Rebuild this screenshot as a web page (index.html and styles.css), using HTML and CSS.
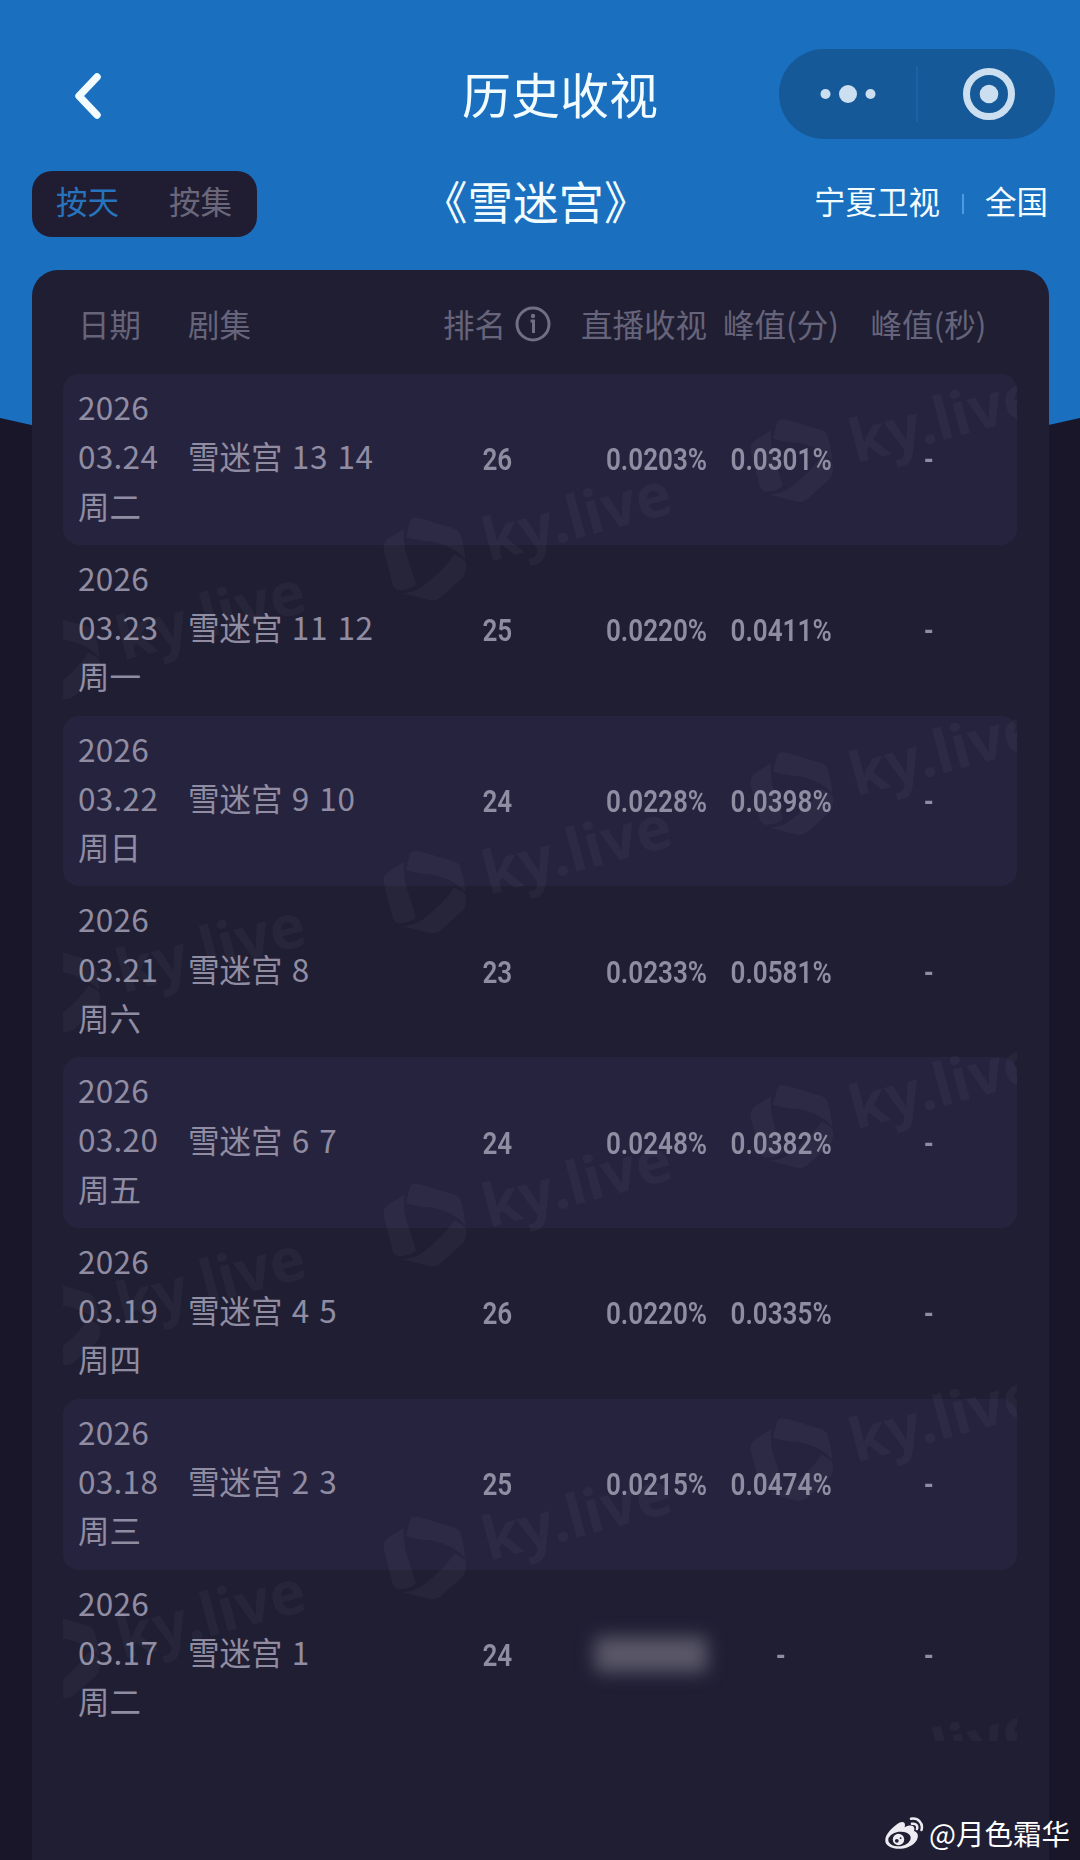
FILE: index.html
```html
<!DOCTYPE html>
<html lang="zh-CN">
<head>
  <meta charset="UTF-8">
  <title>历史收视</title>
  <link rel="stylesheet" href="styles.css">
</head>
<body>

  <header class="navbar">
    <svg class="back" viewBox="0 0 26 46">
      <path d="M22 4 L4 23 L22 42"/>
    </svg>
    <h1>历史收视</h1>
    <div class="capsule">
      <svg class="dots" viewBox="0 0 56 20">
        <circle cx="5.5" cy="10" r="5"/>
        <circle cx="28" cy="10" r="9"/>
        <circle cx="50.5" cy="10" r="5"/>
      </svg>
      <span class="line"></span>
      <svg class="target" viewBox="0 0 52 52">
        <circle class="ring" cx="26" cy="26" r="22.5"/>
        <circle cx="26" cy="26" r="9.3"/>
      </svg>
    </div>
  </header>

  <div class="filters">
    <div class="tabs">
      <span class="active">按天</span>
      <span>按集</span>
    </div>
    <h2>《雪迷宫》</h2>
    <div class="channel">
      <span>宁夏卫视</span>
      <i></i>
      <span>全国</span>
    </div>
  </div>

  <main class="card">
    <div class="row head">
      <span>日期</span>
      <span>剧集</span>
      <span class="rank">排名
        <svg class="info" viewBox="0 0 36 36">
          <circle cx="18" cy="18" r="16"/>
          <circle class="dot" cx="18" cy="10" r="2.2"/>
          <path d="M15.5 15 H18.5 V27"/>
        </svg>
      </span>
      <span class="rate">直播收视</span>
      <span class="peak">峰值(分)</span>
      <span class="peak">峰值(秒)</span>
    </div>

    <div class="list" id="list">
      <svg class="watermark" viewBox="0 0 954 1367">
        <defs>
          <g id="mark">
            <g transform="scale(.3333) translate(-195 -240)">
              <path d="M165 115 Q153 115 149 128 L138 173 Q180 184 215 186 Q285 200 316 240 Q312 195 301 163 Q295 150 275 145 L185 118 Z"/>
              <path d="M132 148 L88 175 Q66 190 72 215 L98 315 Q104 332 118 332 Q150 332 168 315 L135 210 Q130 180 132 148 Z"/>
              <path d="M283 224 Q255 270 183 325 Q160 340 128 341 L205 361 Q225 367 240 355 L308 294 Q320 280 318 250 Q310 235 283 224 Z"/>
            </g>
            <text transform="rotate(-15)" x="61" y="19" textLength="193">ky.live</text>
          </g>
          <g id="marks">
            <use href="#mark" x="-4" y="284"/>
            <use href="#mark" x="362" y="185.5"/>
            <use href="#mark" x="729" y="87"/>
          </g>
        </defs>
        <use href="#marks"/>
        <use href="#marks" y="333"/>
        <use href="#marks" y="666"/>
        <use href="#marks" y="999"/>
        <use href="#marks" y="1332"/>
      </svg>
    </div>
  </main>

  <div class="author">
    <svg viewBox="0 0 40 33">
      <path d="M11 8 C15 4.500 20 3.500 20 8 L19.600 10.300 C25 7 31 8.500 29 14 C34 15.500 34 21 30 25.500 C23 33.500 6 34 1 26.500 C-2 20 5 12.500 11 8 Z"/>
      <ellipse class="hole" cx="14.500" cy="22" rx="11.300" ry="7.200" transform="rotate(-8 14.500 22)"/>
      <circle cx="13.500" cy="22.500" r="5.700"/>
      <circle class="hole" cx="11.800" cy="23.800" r="1.900"/>
      <circle class="hole" cx="15.600" cy="21.200" r=".9"/>
      <path class="wave" d="M26 1.800 C33 .5 38.500 6 36.500 13 M27 6.800 C31 6 33 8.500 32 12"/>
    </svg>
    <span>@月色霜华</span>
  </div>

  <script>
    const rows = [
      ['03.24', '周二', '13 14', 26, '0.0203%', '0.0301%'],
      ['03.23', '周一', '11 12', 25, '0.0220%', '0.0411%'],
      ['03.22', '周日', '9 10', 24, '0.0228%', '0.0398%'],
      ['03.21', '周六', '8', 23, '0.0233%', '0.0581%'],
      ['03.20', '周五', '6 7', 24, '0.0248%', '0.0382%'],
      ['03.19', '周四', '4 5', 26, '0.0220%', '0.0335%'],
      ['03.18', '周三', '2 3', 25, '0.0215%', '0.0474%'],
      ['03.17', '周二', '1', 24, '', '-']
    ];

    const list = document.getElementById('list');

    rows.forEach(function (r) {
      // no value means the rating is hidden behind a blurred block
      const rate = r[4] ? '<b>' + r[4] + '</b>' : '<em class="masked"></em>';

      const row = document.createElement('div');
      row.className = 'row';
      row.innerHTML =
        '<span class="date"><span>2026<br>' + r[0] + '</span><br>' + r[1] + '</span>' +
        '<span class="episode">雪迷宫<span> ' + r[2] + '</span></span>' +
        '<span class="rank"><b>' + r[3] + '</b></span>' +
        '<span class="rate">' + rate + '</span>' +
        '<span class="peak"><b>' + r[5] + '</b></span>' +
        '<span class="peak"><b>-</b></span>';
      list.appendChild(row);
    });
  </script>

</body>
</html>
```
FILE: styles.css
```css
* {
  box-sizing: border-box;
}
body {
  margin: 0;
  height: 1860px;
  overflow: hidden;
  position: relative;
  display: flex;
  flex-direction: column;
  font-family: "Noto Sans CJK SC", sans-serif;
  font-size: 31.5px;
  color: #908da3;
  background-color: #191629;
}
/* blue backdrop, pointed at the bottom */
body::before {
  content: "";
  position: absolute;
  z-index: -1;
  top: 0;
  left: 0;
  width: 100%;
  height: 538px;
  background-color: #1a6fbf;
  clip-path: polygon(0 0, 100% 0, 100% 418px, 50% 100%, 0 418px);
}
h1, h2 {
  margin: 0;
  font-weight: 400;
  color: #f2fcff;
}

/* top bar */
.navbar {
  display: grid;
  grid-template-columns: 387px 317px 276px;
  align-items: center;
  height: 90px;
  margin: 49px 0 0 75px;
}
.back {
  width: 26px;
  height: 46px;
  margin-top: 4px;
  fill: none;
  stroke: #f2fcff;
  stroke-width: 7.5;
  stroke-linecap: round;
  stroke-linejoin: round;
}
h1 {
  font-size: 49px;
  line-height: 86px;
  padding-bottom: 3px;
}
.capsule {
  display: flex;
  align-items: center;
  height: 90px;
  padding-left: 41px;
  border-radius: 45px;
  background-color: #155998;
  fill: #ccdff0;
}
.dots {
  width: 56px;
  height: 20px;
}
.line {
  width: 2px;
  height: 56px;
  margin: 0 45px 0 40px;
  background-color: #1d63a3;
}
.target {
  width: 52px;
  height: 52px;
}
.ring {
  fill: none;
  stroke: #ccdff0;
  stroke-width: 7;
}

/* tabs, drama name and channel */
.filters {
  display: flex;
  align-items: center;
  height: 66px;
  margin: 32px 32px 0;
}
.tabs {
  display: flex;
  gap: 50px;
  width: 225px;
  height: 66px;
  padding-left: 24px;
  border-radius: 20px;
  line-height: 58px;
  color: #6a677a;
  background-color: #201d33;
}
.tabs .active {
  color: #2674bd;
}
h2 {
  margin-left: 165px;
  padding-bottom: 8px;
  font-size: 45.5px;
  line-height: 58px;
  white-space: nowrap;
}
.channel {
  display: flex;
  align-items: center;
  margin-left: auto;
  padding-bottom: 7px;
  line-height: 59px;
  color: #f2fcff;
}
.channel i {
  width: 2px;
  height: 20px;
  margin: 7px 21px 0 22px;
  background-color: #4f9be0;
}

/* table */
.card {
  flex: 1;
  margin: 33px 31px 0 32px;
  padding: 0 32px 0 31px;
  border-radius: 26px 26px 0 0;
  background-color: #201e33;
}
.row {
  display: grid;
  grid-template-columns: 110px 232px 154px 133px 148px 147px;
  align-items: center;
  height: 170.800px;
  padding-left: 15px;
  border-radius: 16px;
  white-space: nowrap;
}
.row:nth-of-type(odd) {
  background-color: #26233f;
}
.row.head {
  height: 104px;
  padding-top: 2px;
  color: #66647a;
  background: none;
}
.list {
  position: relative;
}
.date {
  padding-bottom: 7px;
  line-height: 49.200px;
}
.date span {
  letter-spacing: .3px;
}
.episode {
  padding-bottom: 8px;
}
.episode span {
  letter-spacing: .7px;
  word-spacing: 1.500px;
}
.rank,
.rate,
.peak {
  display: flex;
  justify-content: center;
  align-items: center;
}
.rank {
  gap: 9px;
}
.rate {
  justify-content: flex-end;
}
.info {
  width: 36px;
  height: 36px;
  margin-top: 2px;
  fill: none;
  stroke: #716f84;
  stroke-width: 3;
}
.info .dot {
  fill: #716f84;
  stroke: none;
}
b {
  font-family: Roboto, sans-serif;
  font-size: 32px;
  font-weight: 600;
  transform: scaleX(.815);
}
.rate b {
  transform-origin: right;
}
.masked {
  width: 112px;
  height: 35px;
  background-color: #5a5869;
  filter: blur(9px);
}
.watermark {
  position: absolute;
  top: 0;
  left: 0;
  width: 954px;
  height: 1367px;
  overflow: hidden;
  fill: #fff;
  fill-opacity: .035;
  font-family: "Noto Sans", sans-serif;
  font-size: 60px;
  font-weight: 700;
}

/* signature */
.author {
  position: absolute;
  right: 10px;
  bottom: 6px;
  display: flex;
  align-items: center;
  gap: 4px;
  font-size: 28.500px;
  line-height: 42px;
  color: #fff;
}
.author svg {
  width: 40px;
  height: 33px;
  fill: #eeecf2;
}
.author .hole {
  fill: #201e33;
}
.author .wave {
  fill: none;
  stroke: #eeecf2;
  stroke-width: 2.500;
  stroke-linecap: round;
}
```
